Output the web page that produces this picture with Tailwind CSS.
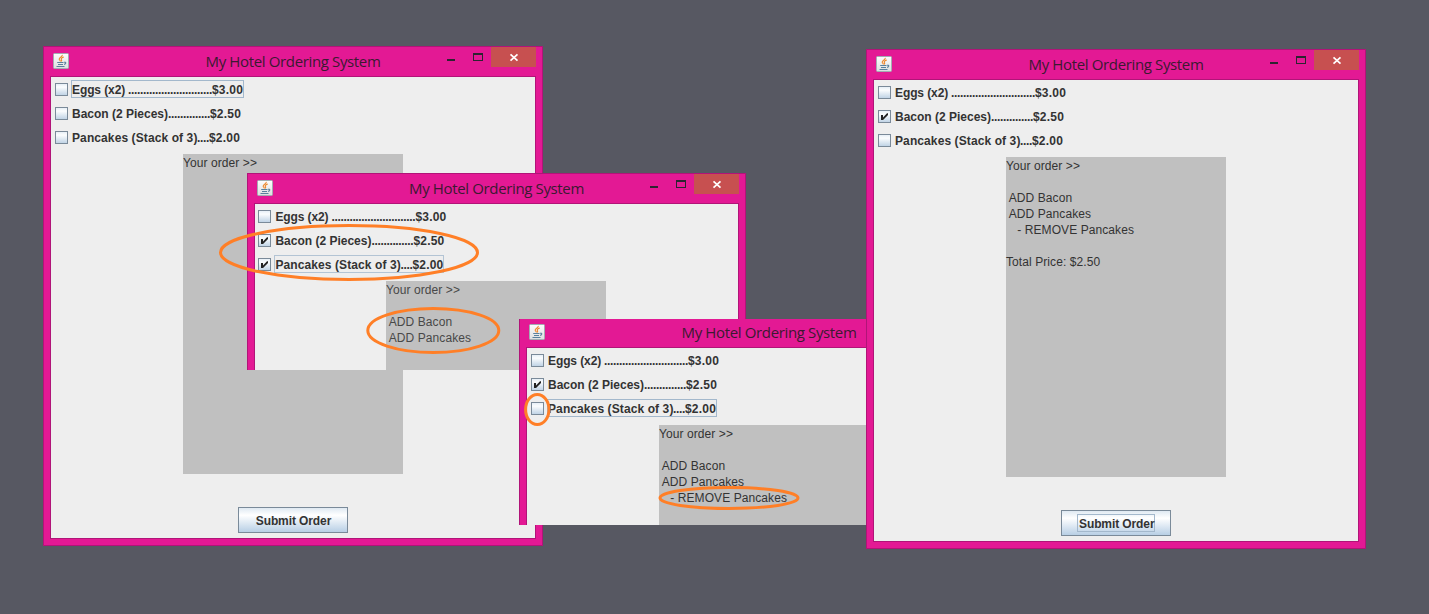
<!DOCTYPE html>
<html lang="en">
<head>
<meta charset="utf-8">
<title>My Hotel Ordering System</title>
<script src="https://cdn.jsdelivr.net/npm/@tailwindcss/browser@4"></script>
</head>
<body class="bg-[#575862]">
<svg class="absolute w-0 h-0">
  <defs>
    <linearGradient id="tile" x1="0" y1="0" x2="0" y2="1"><stop offset="0" stop-color="#fdfdfd"/><stop offset="1" stop-color="#dcdfe0"/></linearGradient>
    <linearGradient id="box" x1="0" y1="0" x2="0" y2="1"><stop offset="0" stop-color="#e4edf5"/><stop offset=".3" stop-color="#fbfdfe"/><stop offset="1" stop-color="#bdd1e4"/></linearGradient>
  </defs>
  <symbol id="java" viewBox="0 0 16 16">
    <rect x=".5" y=".5" width="15" height="15" rx="1" fill="url(#tile)" stroke="#a3adb2"/>
    <path d="M9.300 1.800C9.700 3.800 6 4.500 6.200 6.200C6.300 7.200 7.300 7.300 7.400 8.500M10.800 4C9 4.600 8.100 5.200 8.300 6.300C8.500 7.100 9 7.300 8.400 8.500" fill="none" stroke="#ee8a30" stroke-width="1.100"/>
    <path d="M4.200 9.500H10.500M5 11.500H10M3.500 13.500H11.500M11 9.300C13.500 8.700 13.300 11 11 11.400" fill="none" stroke="#5a819d" stroke-width="1.100"/>
  </symbol>
  <symbol id="controls" viewBox="0 0 89 20">
    <rect x="0" y="12" width="8" height="2" fill="#2c2430"/>
    <path d="M26 6H36V14H26ZM27 8V13H35V8Z" fill="#2c2430" fill-rule="evenodd"/>
    <rect x="44" y="0" width="45" height="20" fill="#c75050"/>
    <path d="M63.500 7.300L70.500 13.700M70.500 7.300L63.500 13.700" stroke="#fff" stroke-width="1.700"/>
  </symbol>
  <symbol id="unchecked" viewBox="0 0 13 13"><rect x=".5" y=".5" width="12" height="12" fill="url(#box)" stroke="#7a8a99"/></symbol>
  <symbol id="checked" viewBox="0 0 13 13"><rect x=".5" y=".5" width="12" height="12" fill="url(#box)" stroke="#7a8a99"/><path d="M3 5H5V7.500L9 3.300H10V5L5 10H3Z" fill="#222"/></symbol>
</svg>

<main class="relative w-[1429px] h-[614px] overflow-hidden font-['Liberation_Sans',Arial,sans-serif] text-[12px] leading-4 text-[#333]">

  <!-- Empty order -->
  <section class="absolute left-[43px] top-[46px] w-[500px] h-[500px] flex flex-col bg-[#e31994] border border-[#b11478] px-[6px] pb-[6px]">
    <header class="h-[29px] shrink-0 grid grid-cols-[1fr_auto_1fr] items-start">
      <svg class="w-4 h-4 ml-[3px] mt-[6px]"><use href="#java"/></svg>
      <h1 class="font-['Open_Sans',sans-serif] text-[15px] leading-[29px] tracking-[-0.36px] text-[#3b1a31] whitespace-nowrap">My Hotel Ordering System</h1>
      <svg class="w-[89px] h-5 justify-self-end"><use href="#controls"/></svg>
    </header>
    <div class="flex-1 bg-[#eee] border border-[#b11478] flex flex-col">
      <div class="flex flex-col font-bold pl-1 whitespace-pre leading-[18px]">
        <label class="h-6 flex items-center gap-[3px]"><svg class="w-[13px] h-[13px] mt-px"><use href="#unchecked"/></svg><span class="h-[18px] border border-[#a3b8cc] flex"><span class="w-[56px] tracking-[-0.1px]">Eggs (x2) </span><span class="w-[84px] tracking-[-0.336px]">............................</span><span class="w-[31px] tracking-[0.2px]">$3.00</span></span></label>
        <label class="h-6 flex items-center gap-[3px]"><svg class="w-[13px] h-[13px] mt-px"><use href="#unchecked"/></svg><span class="h-[18px] border border-transparent flex"><span class="w-[96px]">Bacon (2 Pieces)</span><span class="w-[42px] tracking-[-0.336px]">..............</span><span class="w-[31px] tracking-[0.2px]">$2.50</span></span></label>
        <label class="h-6 flex items-center gap-[3px]"><svg class="w-[13px] h-[13px] mt-px"><use href="#unchecked"/></svg><span class="h-[18px] border border-transparent flex"><span class="w-[125px] tracking-[0.1px]">Pancakes (Stack of 3)</span><span class="w-[12px] tracking-[-0.336px]">....</span><span class="w-[31px] tracking-[0.2px]">$2.00</span></span></label>
      </div>
      <div class="mt-[5px] self-center w-[220px] h-[320px] pt-px bg-[#c0c0c0] whitespace-pre tracking-[0.08px]">Your order &gt;&gt;</div>
      <button class="mt-[33px] self-center w-[110px] h-[26px] pt-[2px] pl-px border border-[#7a8a99] bg-linear-to-b from-[#dfe9f2] via-white via-30% to-[#b8cfe5] font-bold tracking-[-0.1px] flex items-center justify-center">Submit Order</button>
    </div>
  </section>

  <!-- Bacon and pancakes selected -->
  <div class="absolute left-[247px] top-[173px] w-[499px] h-[197px] overflow-hidden">
    <section class="w-[499px] h-[500px] flex flex-col bg-[#e31994] border border-[#b11478] px-[6px] pb-[6px]">
      <header class="h-[29px] shrink-0 grid grid-cols-[1fr_auto_1fr] items-start">
        <svg class="w-4 h-4 ml-[3px] mt-[6px]"><use href="#java"/></svg>
        <h1 class="font-['Open_Sans',sans-serif] text-[15px] leading-[29px] tracking-[-0.36px] text-[#3b1a31] whitespace-nowrap">My Hotel Ordering System</h1>
        <svg class="w-[89px] h-5 justify-self-end"><use href="#controls"/></svg>
      </header>
      <div class="flex-1 bg-[#eee] border border-[#b11478] flex flex-col">
        <div class="flex flex-col font-bold pl-[3.400px] whitespace-pre leading-[18px]">
          <label class="h-6 flex items-center gap-[3px]"><svg class="w-[13px] h-[13px] mt-px"><use href="#unchecked"/></svg><span class="h-[18px] border border-transparent flex"><span class="w-[56px] tracking-[-0.1px]">Eggs (x2) </span><span class="w-[84px] tracking-[-0.336px]">............................</span><span class="w-[31px] tracking-[0.2px]">$3.00</span></span></label>
          <label class="h-6 flex items-center gap-[3px]"><svg class="w-[13px] h-[13px] mt-px"><use href="#checked"/></svg><span class="h-[18px] border border-transparent flex"><span class="w-[96px]">Bacon (2 Pieces)</span><span class="w-[42px] tracking-[-0.336px]">..............</span><span class="w-[31px] tracking-[0.2px]">$2.50</span></span></label>
          <label class="h-6 flex items-center gap-[3px]"><svg class="w-[13px] h-[13px] mt-px"><use href="#checked"/></svg><span class="h-[18px] border border-[#b3c4d4] flex"><span class="w-[125px] tracking-[0.1px]">Pancakes (Stack of 3)</span><span class="w-[12px] tracking-[-0.336px]">....</span><span class="w-[31px] tracking-[0.2px]">$2.00</span></span></label>
        </div>
        <div class="mt-[5px] mr-px self-center w-[220px] h-[320px] pt-px bg-[#c0c0c0] whitespace-pre tracking-[0.08px] text-[#484848]">Your order &gt;&gt;

 ADD Bacon
 ADD Pancakes</div>
      </div>
    </section>
  </div>

  <!-- Pancakes removed -->
  <div class="absolute left-[519px] top-[319px] w-[347px] h-[206px] overflow-hidden">
    <section class="mt-[-2px] w-[500px] h-[500px] flex flex-col bg-[#e31994] border border-[#b11478] px-[6px] pb-[6px]">
      <header class="h-[29px] shrink-0 grid grid-cols-[1fr_auto_1fr] items-start">
        <svg class="w-4 h-4 ml-[3px] mt-[6px]"><use href="#java"/></svg>
        <h1 class="font-['Open_Sans',sans-serif] text-[15px] leading-[29px] tracking-[-0.36px] text-[#3b1a31] whitespace-nowrap">My Hotel Ordering System</h1>
        <svg class="w-[89px] h-5 justify-self-end"><use href="#controls"/></svg>
      </header>
      <div class="flex-1 bg-[#eee] border border-[#b11478] flex flex-col">
        <div class="flex flex-col font-bold pl-1 whitespace-pre leading-[18px]">
          <label class="h-6 flex items-center gap-[3px]"><svg class="w-[13px] h-[13px] mt-px"><use href="#unchecked"/></svg><span class="h-[18px] border border-transparent flex"><span class="w-[56px] tracking-[-0.1px]">Eggs (x2) </span><span class="w-[84px] tracking-[-0.336px]">............................</span><span class="w-[31px] tracking-[0.2px]">$3.00</span></span></label>
          <label class="h-6 flex items-center gap-[3px]"><svg class="w-[13px] h-[13px] mt-px"><use href="#checked"/></svg><span class="h-[18px] border border-transparent flex"><span class="w-[96px]">Bacon (2 Pieces)</span><span class="w-[42px] tracking-[-0.336px]">..............</span><span class="w-[31px] tracking-[0.2px]">$2.50</span></span></label>
          <label class="h-6 flex items-center gap-[3px]"><svg class="w-[13px] h-[13px] mt-px"><use href="#unchecked"/></svg><span class="h-[18px] border border-[#a3b8cc] flex"><span class="w-[125px] tracking-[0.1px]">Pancakes (Stack of 3)</span><span class="w-[12px] tracking-[-0.336px]">....</span><span class="w-[31px] tracking-[0.2px]">$2.00</span></span></label>
        </div>
        <div class="mt-[5px] self-center w-[220px] h-[320px] pt-px bg-[#c0c0c0] whitespace-pre tracking-[0.08px]">Your order &gt;&gt;

 ADD Bacon
 ADD Pancakes
 <span class="pl-px">  - REMOVE Pancakes</span></div>
      </div>
    </section>
  </div>

  <!-- Submitted order -->
  <section class="absolute left-[866px] top-[49px] w-[500px] h-[500px] flex flex-col bg-[#e31994] border border-[#b11478] px-[6px] pb-[6px]">
    <header class="h-[29px] shrink-0 grid grid-cols-[1fr_auto_1fr] items-start">
      <svg class="w-4 h-4 ml-[3px] mt-[6px]"><use href="#java"/></svg>
      <h1 class="font-['Open_Sans',sans-serif] text-[15px] leading-[29px] tracking-[-0.36px] text-[#3b1a31] whitespace-nowrap">My Hotel Ordering System</h1>
      <svg class="w-[89px] h-5 justify-self-end"><use href="#controls"/></svg>
    </header>
    <div class="flex-1 bg-[#eee] border border-[#b11478] flex flex-col">
      <div class="flex flex-col font-bold pl-1 whitespace-pre leading-[18px]">
        <label class="h-6 flex items-center gap-[3px]"><svg class="w-[13px] h-[13px] mt-px"><use href="#unchecked"/></svg><span class="h-[18px] border border-transparent flex"><span class="w-[56px] tracking-[-0.1px]">Eggs (x2) </span><span class="w-[84px] tracking-[-0.336px]">............................</span><span class="w-[31px] tracking-[0.2px]">$3.00</span></span></label>
        <label class="h-6 flex items-center gap-[3px]"><svg class="w-[13px] h-[13px] mt-px"><use href="#checked"/></svg><span class="h-[18px] border border-transparent flex"><span class="w-[96px]">Bacon (2 Pieces)</span><span class="w-[42px] tracking-[-0.336px]">..............</span><span class="w-[31px] tracking-[0.2px]">$2.50</span></span></label>
        <label class="h-6 flex items-center gap-[3px]"><svg class="w-[13px] h-[13px] mt-px"><use href="#unchecked"/></svg><span class="h-[18px] border border-transparent flex"><span class="w-[125px] tracking-[0.1px]">Pancakes (Stack of 3)</span><span class="w-[12px] tracking-[-0.336px]">....</span><span class="w-[31px] tracking-[0.2px]">$2.00</span></span></label>
      </div>
      <div class="mt-[5px] self-center w-[220px] h-[320px] pt-px bg-[#c0c0c0] whitespace-pre tracking-[0.08px]">Your order &gt;&gt;

 ADD Bacon
 ADD Pancakes
 <span class="pl-px">  - REMOVE Pancakes</span>

Total Price: $2.50</div>
      <button class="mt-[33px] self-center w-[110px] h-[26px] border border-[#7a8a99] bg-linear-to-b from-[#dfe9f2] via-white via-30% to-[#b8cfe5] font-bold tracking-[-0.1px] flex items-center justify-center"><span class="w-[78px] h-[18px] pl-px leading-[18px] border border-[#a3b8cc] whitespace-nowrap">Submit Order</span></button>
    </div>
  </section>

  <!-- Highlight rings -->
  <svg class="absolute inset-0 w-[1429px] h-[614px]" fill="none" stroke="#ff7f27" stroke-width="3">
    <ellipse cx="349" cy="252.500" rx="128.500" ry="27"/>
    <ellipse cx="433.300" cy="330.500" rx="65.500" ry="22"/>
    <ellipse cx="537.300" cy="409.500" rx="11.700" ry="15"/>
    <ellipse cx="729" cy="498" rx="69" ry="10.500"/>
  </svg>
</main>
</body>
</html>
